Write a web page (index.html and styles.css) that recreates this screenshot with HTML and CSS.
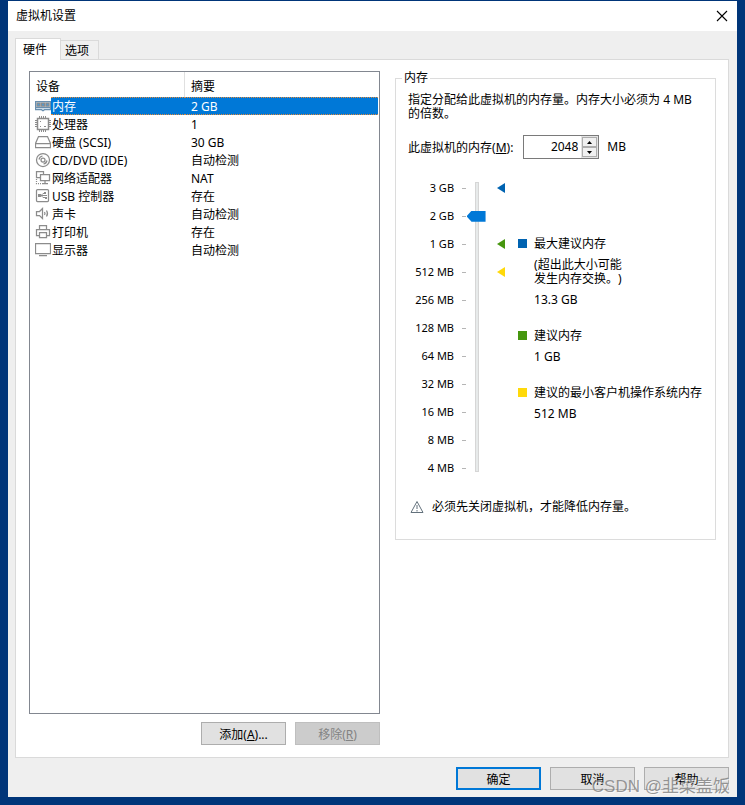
FILE: index.html
```html
<!DOCTYPE html>
<html lang="zh-CN">
<head>
  <meta charset="UTF-8">
  <meta name="viewport" content="width=device-width, initial-scale=1.0">
  <title>虚拟机设置</title>
  <link rel="stylesheet" href="styles.css">
</head>
<body>
  <main class="dialog">
    <header class="titlebar">
      <h1>虚拟机设置</h1>
      <button class="close" type="button" aria-label="关闭">
        <svg width="12" height="12" viewBox="0 0 12 12"><path d="M1 1l10 10M11 1L1 11" stroke="#000" stroke-width="1.1" fill="none"/></svg>
      </button>
    </header>

    <div class="tabs" role="tablist">
      <button class="tab active" type="button" role="tab" aria-selected="true">硬件</button>
      <button class="tab" type="button" role="tab" aria-selected="false">选项</button>
    </div>

    <div class="panel">
      <!-- Device list -->
      <section class="devices">
        <div class="device-list">
          <table>
            <thead>
              <tr><th class="name-head" colspan="2">设备</th><th class="summary">摘要</th></tr>
            </thead>
            <tbody>
              <tr class="selected">
                <td class="icon"><svg width="16" height="16" viewBox="0 0 16 16"><path d="M.5 3.500h15v8h-6l-1 1h-1l-1-1h-6z" fill="#d9e8f3" stroke="#6a8fae"/><path d="M2 5h3v3H2zM6.500 5h3v3h-3zM11 5h3v3h-3z" fill="#4a9bd8"/><path d="M1 9.500h14" stroke="#6a8fae"/></svg></td>
                <td class="name">内存</td><td class="summary">2 GB</td>
              </tr>
              <tr>
                <td class="icon"><svg width="16" height="16" viewBox="0 0 16 16"><rect x="2.500" y="2.500" width="11" height="11" stroke-width="1.500"/><path d="M4.500 0v2M6.500 0v2M8.500 0v2M10.500 0v2M4.500 14v2M6.500 14v2M8.500 14v2M10.500 14v2M0 4.500h2M0 6.500h2M0 8.500h2M0 10.500h2M14 4.500h2M14 6.500h2M14 8.500h2M14 10.500h2M5 5.500h1M5 10.500h1M9 10.500h2" stroke-width="1"/></svg></td>
                <td class="name">处理器</td><td class="summary">1</td>
              </tr>
              <tr>
                <td class="icon"><svg width="16" height="16" viewBox="0 0 16 16"><path d="M.5 9.500l3-7h9l3 7v4H.5zM.5 9.500h15"/></svg></td>
                <td class="name">硬盘 (SCSI)</td><td class="summary">30 GB</td>
              </tr>
              <tr>
                <td class="icon"><svg width="16" height="16" viewBox="0 0 16 16"><circle cx="8" cy="8" r="6.500"/><circle cx="8" cy="8" r="2"/><path d="M4 7.500A4.500 4.500 0 0 1 7.500 4M12 8.500A4.500 4.500 0 0 1 8.500 12"/></svg></td>
                <td class="name">CD/DVD (IDE)</td><td class="summary">自动检测</td>
              </tr>
              <tr>
                <td class="icon"><svg width="16" height="16" viewBox="0 0 16 16"><path d="M5 7.500H1.500v-6h7V4M5.500 4.500h9v6h-9zM10 11v2.500M7 13.500h6"/><path d="M1.500 9v4.500H6" stroke-dasharray="1 1"/></svg></td>
                <td class="name">网络适配器</td><td class="summary">NAT</td>
              </tr>
              <tr>
                <td class="icon"><svg width="16" height="16" viewBox="0 0 16 16"><rect x="1.500" y="1.500" width="12" height="12" rx="1"/><path d="M4 7.500h8M6 7.500l2-2h2M6 7.500l2 2h2" stroke-width="1"/><path d="M3 6h3v3H3zM9 4h2v2H9zM10 9h2v2h-2z" fill="#8c8c8c" stroke="none"/></svg></td>
                <td class="name">USB 控制器</td><td class="summary">存在</td>
              </tr>
              <tr>
                <td class="icon"><svg width="16" height="16" viewBox="0 0 16 16"><path d="M1.500 5.500h3l3-3v10l-3-3h-3z"/><path d="M9.500 6q1 1.500 0 3M11.500 4.500q2 3 0 6"/></svg></td>
                <td class="name">声卡</td><td class="summary">自动检测</td>
              </tr>
              <tr>
                <td class="icon"><svg width="16" height="16" viewBox="0 0 16 16"><path d="M4.500 5V1.500h7V5M4 11.500H1.500v-6h13v6H12M4.500 8.500h7v5h-7z"/></svg></td>
                <td class="name">打印机</td><td class="summary">存在</td>
              </tr>
              <tr>
                <td class="icon"><svg width="16" height="16" viewBox="0 0 16 16"><path d="M.5 1.500h15v10H.5zM4 13.500h8"/></svg></td>
                <td class="name">显示器</td><td class="summary">自动检测</td>
              </tr>
            </tbody>
          </table>
        </div>
        <div class="list-actions">
          <button class="btn" type="button">添加(<u>A</u>)...</button>
          <button class="btn" type="button" disabled>移除(<u>R</u>)</button>
        </div>
      </section>

      <!-- Memory settings -->
      <fieldset class="memory">
        <legend>内存</legend>
        <p>指定分配给此虚拟机的内存量。内存大小必须为 4 MB 的倍数。</p>

        <div class="amount">
          <label for="memory">此虚拟机的内存(<u>M</u>):</label>
          <div class="spinner">
            <input id="memory" type="text" inputmode="numeric" value="2048">
            <div class="steps">
              <button type="button" aria-label="增加"><svg width="5" height="3" viewBox="0 0 5 3"><path d="M0 3l2.500-3L5 3z"/></svg></button>
              <button type="button" aria-label="减少"><svg width="5" height="3" viewBox="0 0 5 3"><path d="M0 0l2.500 3L5 0z"/></svg></button>
            </div>
          </div>
          <span>MB</span>
        </div>

        <div class="scale">
          <ul class="ticks">
            <li>3 GB</li>
            <li>2 GB</li>
            <li>1 GB</li>
            <li>512 MB</li>
            <li>256 MB</li>
            <li>128 MB</li>
            <li>64 MB</li>
            <li>32 MB</li>
            <li>16 MB</li>
            <li>8 MB</li>
            <li>4 MB</li>
          </ul>
          <input class="slider" type="range" min="0" max="10" value="9" aria-label="内存大小">
          <div class="markers">
            <svg class="max" width="8" height="10" viewBox="0 0 8 10"><path d="M8 0v10L0 5z"/></svg>
            <svg class="recommended" width="8" height="10" viewBox="0 0 8 10"><path d="M8 0v10L0 5z"/></svg>
            <svg class="min" width="8" height="10" viewBox="0 0 8 10"><path d="M8 0v10L0 5z"/></svg>
          </div>
          <dl class="hints">
            <dt class="max">最大建议内存</dt>
            <dd class="note">(超出此大小可能<br>发生内存交换。)</dd>
            <dd>13.3 GB</dd>
            <dt class="recommended">建议内存</dt>
            <dd>1 GB</dd>
            <dt class="min">建议的最小客户机操作系统内存</dt>
            <dd>512 MB</dd>
          </dl>
        </div>

        <div class="warning">
          <svg width="14" height="14" viewBox="0 0 14 14" fill="none" stroke="#63717c"><path d="M7 1.500l6 11H1z"/><path d="M7 5v4M7 10v1.500"/></svg>
          <span>必须先关闭虚拟机，才能降低内存量。</span>
        </div>
      </fieldset>
    </div>

    <footer class="actions">
      <button class="btn primary" type="button">确定</button>
      <button class="btn" type="button">取消</button>
      <button class="btn" type="button">帮助</button>
    </footer>
  </main>
  <div class="watermark">CSDN @韭菜盖饭</div>
</body>
</html>
```
FILE: styles.css
```css
* {
  box-sizing: border-box;
}
body {
  margin: 0;
  min-height: 100vh;
  display: flex;
  padding: 1px 8px 8px;
  background-color: #003579;
  color: #000;
  font: 12px/14px "Noto Sans", "Noto Sans CJK SC", sans-serif;
  text-spacing-trim: space-all;
}
button, input {
  font: inherit;
  color: inherit;
}
.dialog {
  flex: 1;
  display: flex;
  flex-direction: column;
  background-color: #efefef;
}
.titlebar {
  display: flex;
  justify-content: space-between;
  align-items: center;
  height: 30px;
  padding: 0 9px 0 8px;
  background-color: #fff;
}
.titlebar h1 {
  margin: 0;
  font-size: 12px;
  font-weight: normal;
}
.close {
  display: flex;
  padding: 0;
  border: none;
  background: none;
}

/* Tabs */
.tabs {
  display: flex;
  align-items: flex-end;
  padding: 7px 7px 0;
}
.tab {
  height: 19px;
  padding: 2px 9px 0 4px;
  border: 1px solid #dadada;
  border-width: 1px 1px 0 0;
  background-color: #f0f0f0;
}
.tab.active {
  z-index: 1;
  height: 22px;
  margin-bottom: -1px;
  padding: 0 13px 0 7px;
  border-left-width: 1px;
  background-color: #fff;
}
.panel {
  flex: 1;
  display: grid;
  grid-template-columns: 35fr 32fr;
  gap: 15px;
  margin: 0 8px 0 7px;
  padding: 11px 12px 12px 13px;
  border: 1px solid #dadada;
  background-color: #fff;
}

/* Device list */
.devices {
  display: flex;
  flex-direction: column;
  gap: 8px;
}
.device-list {
  flex: 1;
  padding-right: 1px;
  border: 1px solid #828790;
}
.device-list table {
  width: 100%;
  border-collapse: separate;
  border-spacing: 0;
}
.device-list th {
  height: 25px;
  padding: 4px 6px 0;
  text-align: left;
  font-weight: normal;
}
.device-list th.name-head {
  border-right: 1px solid #e0e0e0;
}
.device-list td {
  height: 18px;
  padding: 2px 1px 0;
}
.device-list td.icon {
  width: 21px;
  padding: 0 0 0 5px;
}
.icon svg {
  display: block;
  fill: none;
  stroke: #8c8c8c;
  stroke-width: 1.25;
}
.device-list td.name {
  width: 134px;
}
.device-list .summary {
  padding-left: 6px;
}
.selected .name, .selected .summary {
  border: 1px dotted #e08a3c;
  border-width: 1px 0;
  background-color: #0078d7;
  color: #fff;
}
.list-actions {
  display: flex;
  justify-content: flex-end;
  gap: 9px;
}
.btn {
  width: 85px;
  height: 23px;
  padding: 2px 0 0;
  border: 1px solid #adadad;
  background-color: #e1e1e1;
}
.btn:disabled {
  border-color: #bfbfbf;
  background-color: #ccc;
  color: #838383;
}
.btn.primary {
  border: 2px solid #0078d7;
}

/* Memory settings */
.memory {
  align-self: start;
  min-width: 0;
  margin: 0;
  padding: 8px 11px 25px 12px;
  border: 1px solid #dcdcdc;
}
.memory legend {
  margin-left: -6px;
  padding: 0 2px;
}
.memory p {
  margin: 0;
}
.amount {
  display: flex;
  align-items: center;
  gap: 8px;
  margin-top: 14px;
}
.amount label {
  padding: 2px 2px 0 0;
}
.spinner {
  display: flex;
  width: 76px;
  height: 24px;
  border: 1px solid #7a7a7a;
}
.spinner input {
  flex: 1;
  min-width: 0;
  padding: 0 3px;
  border: none;
  text-align: right;
}
.steps {
  display: flex;
  flex-direction: column;
  width: 17px;
  padding: 1px;
  background-color: #e3e3e3;
}
.steps button {
  flex: 1;
  display: flex;
  align-items: center;
  justify-content: center;
  padding: 0;
  border: 1px solid #adadad;
  background-color: #f0f0f0;
}

/* Memory scale */
.scale {
  display: flex;
  margin-top: 15px;
}
.scale ul {
  margin: 0;
  padding: 0;
  list-style: none;
}
.ticks {
  width: 58px;
  font-size: 11px;
}
.ticks li {
  display: flex;
  align-items: center;
  justify-content: flex-end;
  gap: 8px;
  height: 28px;
}
.ticks li::after {
  content: "";
  width: 4px;
  height: 1px;
  background-color: #b5b5b5;
}
.slider {
  width: 19px;
  height: 290px;
  margin: 8px 0 0 1px;
  -webkit-appearance: none;
  appearance: none;
  writing-mode: vertical-lr;
  direction: rtl;
  background: none;
}
.slider::-webkit-slider-runnable-track {
  width: 4px;
  border: 1px solid #d6d6d6;
  background-color: #e7eaea;
}
.slider::-webkit-slider-thumb {
  -webkit-appearance: none;
  width: 19px;
  height: 11px;
  margin-left: -9px;
  background-color: #0078d7;
  clip-path: polygon(5px 0, 100% 0, 100% 100%, 5px 100%, 0 50%);
}
.markers {
  display: grid;
  grid-template-rows: repeat(4, 28px);
  align-items: center;
  align-content: start;
  margin-left: 11px;
}
.markers .max {
  grid-row: 1;
  fill: #0063b1;
}
.markers .recommended {
  grid-row: 3;
  fill: #46960f;
}
.markers .min {
  grid-row: 4;
  fill: #ffd90a;
}
.hints {
  margin: 59px 0 0 13px;
  line-height: 21px;
  white-space: nowrap;
}
.hints dt {
  display: flex;
  align-items: center;
  gap: 7px;
}
.hints dt::before {
  content: "";
  width: 9px;
  height: 9px;
}
.hints dt.max::before {
  background-color: #0063b1;
}
.hints dt.recommended::before {
  background-color: #46960f;
}
.hints dt.min::before {
  background-color: #ffd90a;
}
.hints dd {
  margin: 0 0 15px 16px;
}
.hints dd.note {
  margin: 4px 0 3px 16px;
  line-height: 14px;
}
.warning {
  display: flex;
  align-items: center;
  gap: 8px;
  margin: 18px 0 0 2px;
}

.actions {
  display: flex;
  justify-content: flex-end;
  gap: 9px;
  padding: 9px 8px 7px;
}
.watermark {
  position: absolute;
  right: 15px;
  bottom: 8px;
  color: rgba(120, 120, 120, 0.75);
  font: 17px/20px "Liberation Sans", "Noto Sans CJK SC", sans-serif;
  text-shadow: 1px 1px 0 rgba(255, 255, 255, 0.6);
  pointer-events: none;
}
```
